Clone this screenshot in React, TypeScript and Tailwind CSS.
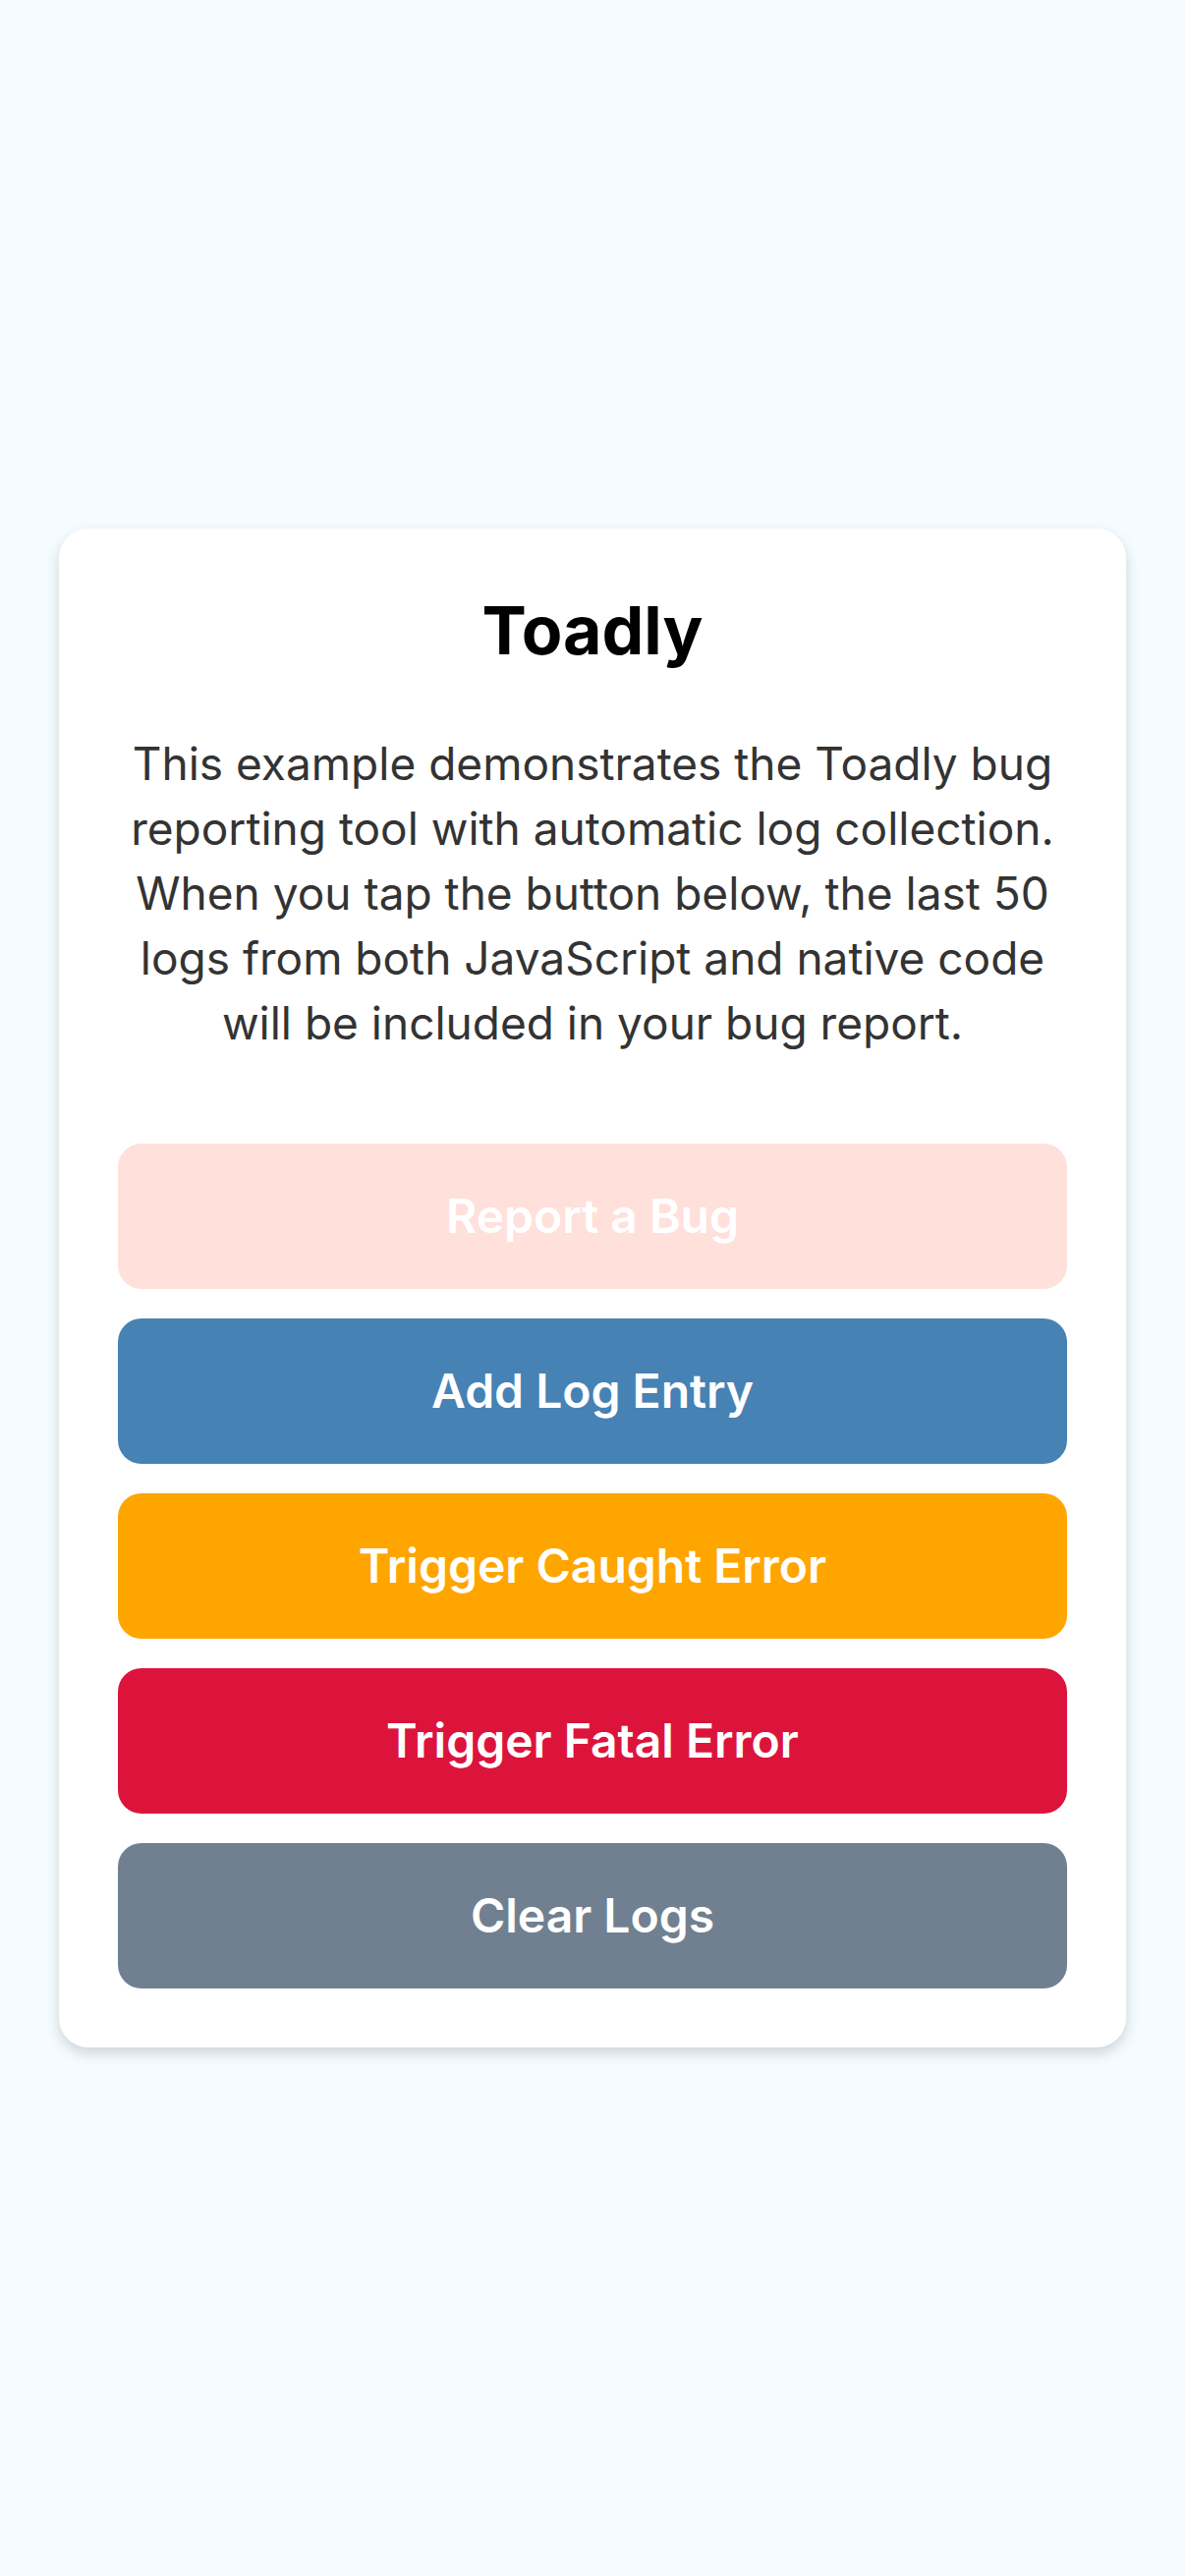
import React from 'react';

const buttons = [
  { label: 'Report a Bug', className: 'bg-[#ffe0db]' },
  { label: 'Add Log Entry', className: 'bg-[#4682b4]' },
  { label: 'Trigger Caught Error', className: 'bg-[#ffa500]' },
  { label: 'Trigger Fatal Error', className: 'bg-[#dc143c]' },
  { label: 'Clear Logs', className: 'bg-[#708090]' },
];

const lines = [
  'This example demonstrates the Toadly bug',
  'reporting tool with automatic log collection.',
  'When you tap the button below, the last 50',
  'logs from both JavaScript and native code',
  'will be included in your bug report.',
];

export default function App() {
  return (
    <div className="min-h-[2622px] w-full bg-[#f5fcff] flex flex-col justify-center px-[60px] font-['Inter','Noto_Sans',sans-serif]">
      <div className="bg-white rounded-[30px] p-[60px] shadow-[0_6px_14px_rgba(0,0,0,0.16)]">
        <h1 className="text-center text-[68px] leading-[86px] font-bold text-black">Toadly</h1>
        <p className="mt-[60px] mb-[90px] text-center text-[46px] leading-[66px] text-[#333333]">
          {lines.map((line) => (
            <span key={line} className="block whitespace-nowrap">
              {line}
            </span>
          ))}
        </p>
        <div className="flex flex-col gap-[30px]">
          {buttons.map((b) => (
            <button
              key={b.label}
              className={`h-[148px] w-full rounded-[24px] flex items-center justify-center text-white text-[48px] font-semibold ${b.className}`}
            >
              {b.label}
            </button>
          ))}
        </div>
      </div>
    </div>
  );
}
